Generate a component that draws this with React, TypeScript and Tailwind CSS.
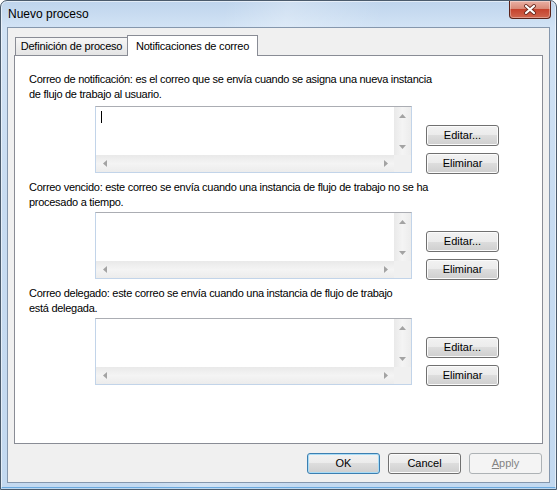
import React from "react";

function ArrowV({ up }: { up?: boolean }) {
  return (
    <svg width="7" height="4" viewBox="0 0 7 4">
      {up ? (
        <polygon points="0,4 7,4 3.5,0" fill="#a3a3a3" />
      ) : (
        <polygon points="0,0 7,0 3.5,4" fill="#a3a3a3" />
      )}
    </svg>
  );
}

function ArrowH({ left }: { left?: boolean }) {
  return (
    <svg width="4" height="7" viewBox="0 0 4 7">
      {left ? (
        <polygon points="4,0 4,7 0,3.5" fill="#a3a3a3" />
      ) : (
        <polygon points="0,0 0,7 4,3.5" fill="#a3a3a3" />
      )}
    </svg>
  );
}

function ScrollBox({ caret }: { caret?: boolean }) {
  return (
    <div className="w-[317px] h-[67px] shrink-0 bg-white border border-[#c2d4e9] border-t-[#abadb3] flex flex-col">
      <div className="flex flex-1 min-h-0">
        <div className="flex-1 relative">
          {caret && <div className="absolute left-[5px] top-[4px] w-px h-[12px] bg-black" />}
        </div>
        <div className="w-[17px] bg-[linear-gradient(90deg,#e9e9e9,#f4f4f4_50%,#ececec)] flex flex-col justify-between">
          <div className="h-[17px] flex items-center justify-center">
            <ArrowV up />
          </div>
          <div className="h-[17px] flex items-center justify-center">
            <ArrowV />
          </div>
        </div>
      </div>
      <div className="h-[17px] flex shrink-0">
        <div className="flex-1 bg-[linear-gradient(180deg,#e9e9e9,#f4f4f4_50%,#ececec)] flex justify-between items-center">
          <div className="w-[17px] flex items-center justify-center">
            <ArrowH left />
          </div>
          <div className="w-[17px] flex items-center justify-center">
            <ArrowH />
          </div>
        </div>
        <div className="w-[17px] bg-[#f0f0f0]" />
      </div>
    </div>
  );
}

function Btn({ children }: { children: React.ReactNode }) {
  return (
    <div className="w-[73px] h-[21px] shrink-0 rounded-[3px] border border-[#707070] bg-[linear-gradient(180deg,#f2f2f2_0%,#ebebeb_50%,#dddddd_50%,#cfcfcf_100%)] shadow-[inset_0_0_0_1px_#fbfbfb] flex items-center justify-center text-[11px] leading-none text-black">
      {children}
    </div>
  );
}

function Section({
  lines,
  caret,
  first,
}: {
  lines: [string, string];
  caret?: boolean;
  first?: boolean;
}) {
  return (
    <div className={first ? "flex flex-col pt-[16px]" : "flex flex-col mt-[7px]"}>
      <div className="pl-[14px] text-[11px] leading-[15px] tracking-[-0.28px] text-black whitespace-nowrap">
        <div>{lines[0]}</div>
        <div>{lines[1]}</div>
      </div>
      <div className={first ? "flex h-[67px] pl-[80px] mt-[4px]" : "flex h-[67px] pl-[80px] mt-[2px]"}>
        <ScrollBox caret={caret} />
        <div className="ml-[14px] flex flex-col gap-[7px] pt-[19px]">
          <Btn>Editar...</Btn>
          <Btn>Eliminar</Btn>
        </div>
      </div>
    </div>
  );
}

export default function App() {
  return (
    <div className="w-[557px] h-[490px] flex flex-col rounded-t-[7px] border border-[#4b5b6c] bg-[linear-gradient(100deg,rgba(255,255,255,0)_35%,rgba(255,255,255,0.25)_45%,rgba(255,255,255,0)_60%),linear-gradient(180deg,#bed4ec_0px,#d2e3f5_26px,#c8dcf1_200px,#c3d9f0_100%)] shadow-[inset_0_0_0_1px_rgba(255,255,255,0.55),inset_0_-2px_0_#6aa9df] overflow-hidden font-['Liberation_Sans',Arial,sans-serif]">
      <div className="h-[26px] shrink-0 flex justify-between items-start">
        <span className="ml-[7px] mt-[6px] text-[12px] leading-[15px] text-black">Nuevo proceso</span>
        <div className="mr-[5px] w-[42px] h-[18px] rounded-b-[4px] border border-t-0 border-[#5a2219] bg-[linear-gradient(180deg,#eab0a4_0%,#d98a78_45%,#c6432e_50%,#d0664f_100%)] shadow-[inset_0_0_0_1px_rgba(255,255,255,0.35)] flex items-center justify-center">
          <svg width="14" height="11" viewBox="0 0 14 11">
            <path d="M3 2 L11 9 M11 2 L3 9" stroke="#6b2a20" strokeWidth="3.8" strokeLinecap="round" />
            <path d="M3 2 L11 9 M11 2 L3 9" stroke="#ffffff" strokeWidth="2.2" strokeLinecap="round" />
          </svg>
        </div>
      </div>
      <div className="flex-1 flex flex-col px-[6px] pb-[6px]">
        <div className="flex-1 border border-[#8597ad] bg-[#f0f0f0] flex flex-col px-[6px]">
          <div className="h-[27px] shrink-0 flex items-end pl-[1px]">
            <div className="w-[113px] h-[18px] border border-b-0 border-[#898c95] bg-[linear-gradient(180deg,#f6f6f6,#e4e4e4)] flex items-center justify-center text-[11px] leading-none tracking-[-0.2px] text-black whitespace-nowrap">
              Definición de proceso
            </div>
            <div className="relative z-10 -ml-px -mb-px w-[131px] h-[21px] border border-b-0 border-[#898c95] bg-white flex items-start justify-center pt-[4px] text-[11px] leading-[13px] tracking-[-0.2px] text-black whitespace-nowrap">
              Notificaciones de correo
            </div>
          </div>
          <div className="h-[389px] shrink-0 border border-[#898c95] bg-white flex flex-col">
            <Section
              first
              caret
              lines={[
                "Correo de notificación: es el correo que se envía cuando se asigna una nueva instancia",
                "de flujo de trabajo al usuario.",
              ]}
            />
            <Section
              lines={[
                "Correo vencido: este correo se envía cuando una instancia de flujo de trabajo no se ha",
                "procesado a tiempo.",
              ]}
            />
            <Section
              lines={[
                "Correo delegado: este correo se envía cuando una instancia de flujo de trabajo",
                "está delegada.",
              ]}
            />
          </div>
          <div className="flex justify-end gap-[8px] mt-[9px] pr-px">
            <div className="w-[73px] h-[21px] rounded-[3px] border border-[#3c7fb1] bg-[linear-gradient(180deg,#f2f2f2_0%,#ebebeb_50%,#dddddd_50%,#cfcfcf_100%)] shadow-[inset_0_0_0_1px_#a9dcf6] flex items-center justify-center text-[11px] leading-none text-black">
              OK
            </div>
            <Btn>Cancel</Btn>
            <div className="w-[73px] h-[21px] rounded-[3px] border border-[#adb2b5] bg-[#f4f4f4] flex items-center justify-center text-[11px] leading-none text-[#838383]">
              <span>
                <span className="underline">A</span>pply
              </span>
            </div>
          </div>
        </div>
      </div>
    </div>
  );
}
